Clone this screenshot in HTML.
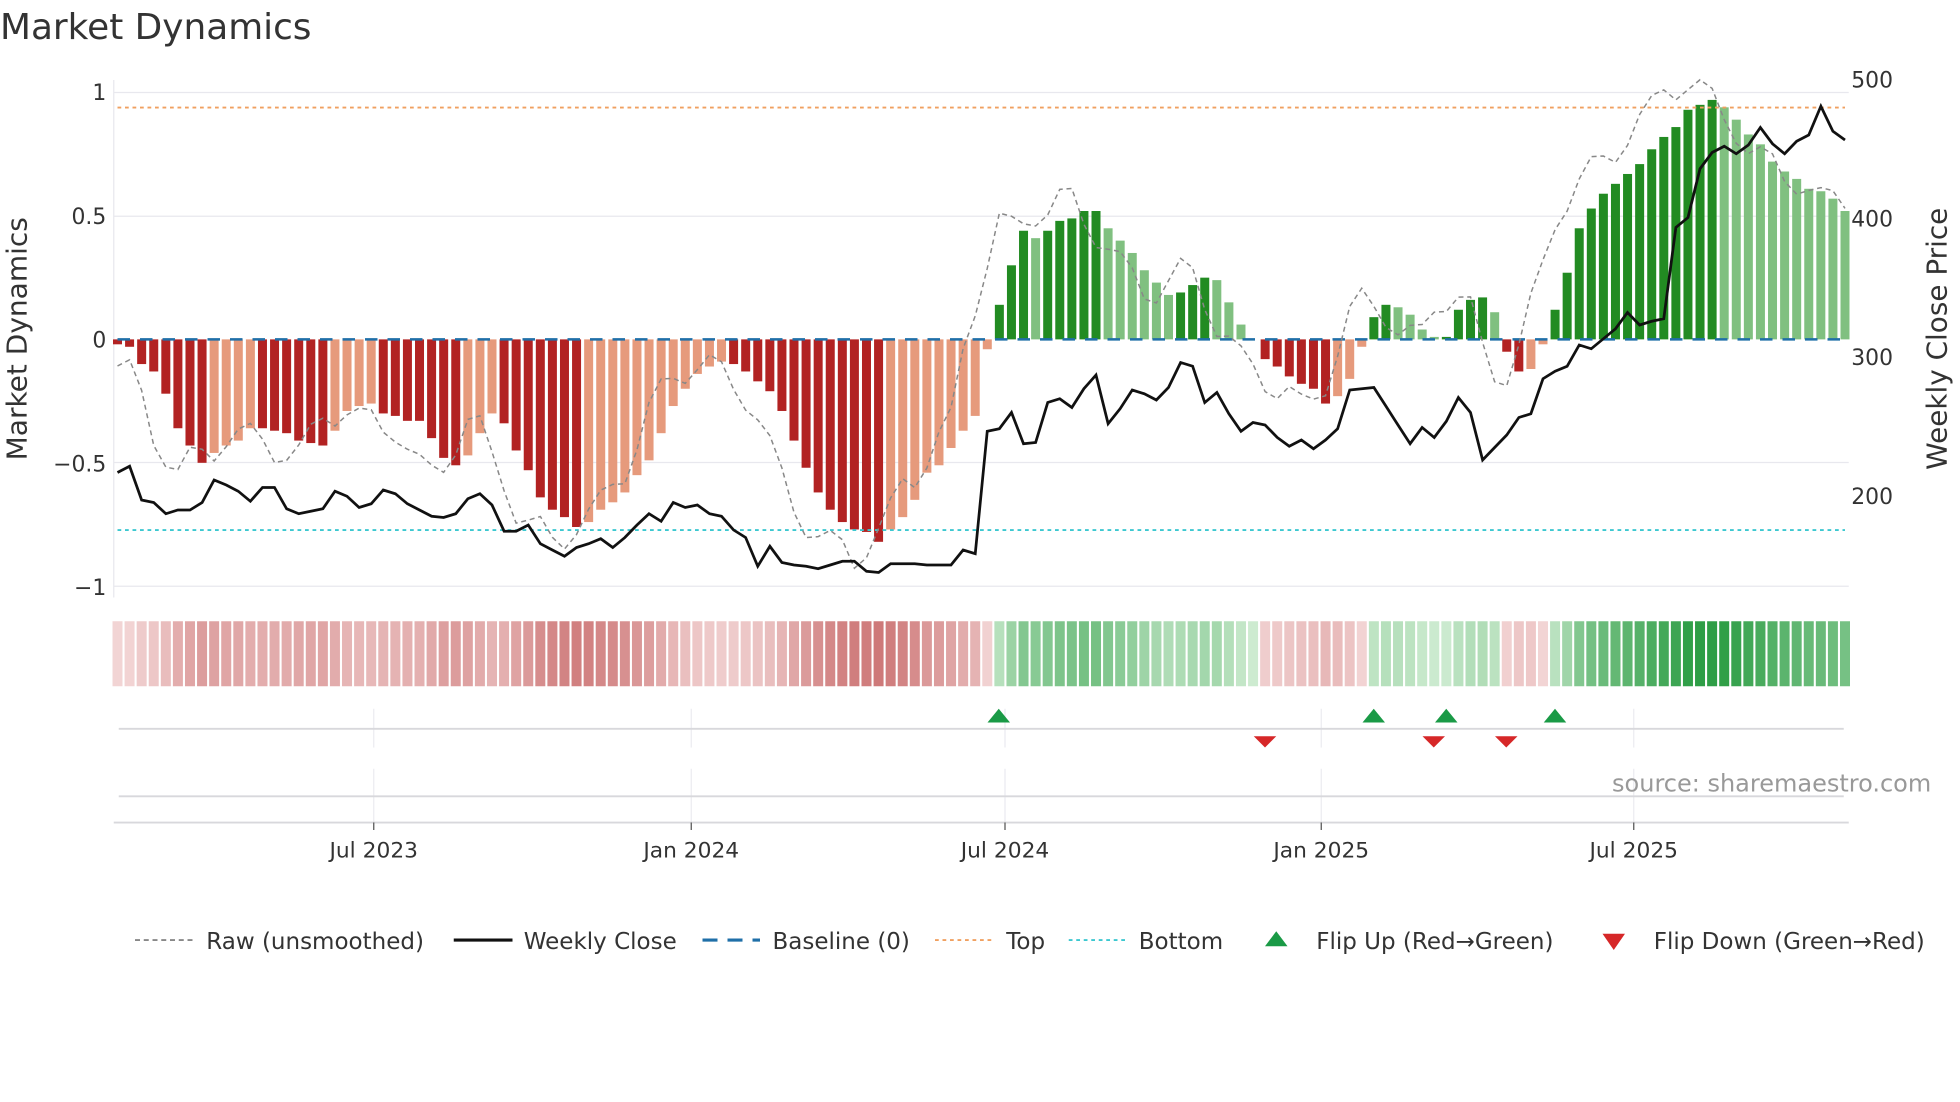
<!DOCTYPE html>
<html><head><meta charset="utf-8"><style>
html,body{margin:0;padding:0;background:#fff;width:1960px;height:1102px;overflow:hidden}
svg{display:block;font-family:"DejaVu Sans","Liberation Sans",sans-serif}
</style></head><body>
<svg id="s" width="1960" height="1102" viewBox="0 0 1568 881.6" xmlns="http://www.w3.org/2000/svg">
<rect width="1568" height="882" fill="#fff"/>
<text x="0" y="31" font-size="28.7" fill="#333">Market Dynamics</text>
<g stroke="#e8e8ee" stroke-width="1">
<line x1="91" x2="1479" y1="74" y2="74"/><line x1="91" x2="1479" y1="173" y2="173"/>
<line x1="91" x2="1479" y1="370" y2="370"/><line x1="91" x2="1479" y1="469" y2="469"/>
</g>
<line x1="91" x2="91" y1="64" y2="478" stroke="#e8e8ee"/>
<g font-size="17.5" fill="#333" text-anchor="end">
<text x="85" y="80">1</text><text x="85" y="179">0.5</text><text x="85" y="278">0</text>
<text x="85" y="377">−0.5</text><text x="85" y="476">−1</text>
</g>
<g font-size="17.5" fill="#333">
<text x="1481" y="70">500</text><text x="1481" y="181">400</text><text x="1481" y="292">300</text><text x="1481" y="403">200</text>
</g>
<text transform="translate(21,271) rotate(-90)" font-size="22.4" fill="#333" text-anchor="middle">Market Dynamics</text>
<text transform="translate(1557,271) rotate(-90)" font-size="22.3" fill="#333" text-anchor="middle">Weekly Close Price</text>
<g id="bars"></g>
<g id="strip"></g>
<line x1="94" x2="1476" y1="86" y2="86" stroke="#f0a060" stroke-width="1.5" stroke-dasharray="3,3"/>
<line x1="94" x2="1476" y1="424" y2="424" stroke="#3cc8d0" stroke-width="1.5" stroke-dasharray="3,3"/>
<line x1="94" x2="1476" y1="271.5" y2="271.5" stroke="#1f6fa8" stroke-width="2" stroke-dasharray="10,8"/>
<polyline id="raw" fill="none" stroke="#888" stroke-width="1.2" stroke-dasharray="4,3"/>
<polyline id="px" fill="none" stroke="#111" stroke-width="2.2"/>
<g stroke="#ebebf0"><line x1="299" x2="299" y1="567" y2="598"/><line x1="553" x2="553" y1="567" y2="598"/><line x1="804" x2="804" y1="567" y2="598"/><line x1="1057" x2="1057" y1="567" y2="598"/><line x1="1307" x2="1307" y1="567" y2="598"/>
<line x1="299" x2="299" y1="615" y2="658"/><line x1="553" x2="553" y1="615" y2="658"/><line x1="804" x2="804" y1="615" y2="658"/><line x1="1057" x2="1057" y1="615" y2="658"/><line x1="1307" x2="1307" y1="615" y2="658"/></g>
<line x1="95" x2="1475" y1="583" y2="583" stroke="#d8d8dc" stroke-width="1.5"/>
<line x1="95" x2="1475" y1="637" y2="637" stroke="#d8d8dc" stroke-width="1.5"/>
<line x1="91" x2="1479" y1="658" y2="658" stroke="#d8d8dc" stroke-width="1.5"/>
<g fill="#1a9a46"><path d="M790,578 L799,567 L808,578Z"/><path d="M1090,578 L1099,567 L1108,578Z"/><path d="M1148,578 L1157,567 L1166,578Z"/><path d="M1235,578 L1244,567 L1253,578Z"/></g>
<g fill="#d62728"><path d="M1003,589 L1021,589 L1012,598Z"/><path d="M1138,589 L1156,589 L1147,598Z"/><path d="M1196,589 L1214,589 L1205,598Z"/></g>
<g stroke="#555"><line x1="299" x2="299" y1="658" y2="664"/><line x1="553" x2="553" y1="658" y2="664"/><line x1="804" x2="804" y1="658" y2="664"/><line x1="1057" x2="1057" y1="658" y2="664"/><line x1="1307" x2="1307" y1="658" y2="664"/></g>
<g font-size="17.4" fill="#333" text-anchor="middle">
<text x="299" y="686">Jul 2023</text><text x="553" y="686">Jan 2024</text><text x="804" y="686">Jul 2024</text><text x="1057" y="686">Jan 2025</text><text x="1307" y="686">Jul 2025</text>
</g>
<text x="1545" y="633" font-size="19.2" fill="#999" text-anchor="end">source: sharemaestro.com</text>
<g font-size="18.4" fill="#333">
<line x1="108" x2="154" y1="752" y2="752" stroke="#888" stroke-width="1.5" stroke-dasharray="4,3"/><text x="165" y="759">Raw (unsmoothed)</text>
<line x1="363" x2="410" y1="752" y2="752" stroke="#111" stroke-width="2.5"/><text x="419" y="759">Weekly Close</text>
<line x1="562" x2="608" y1="752" y2="752" stroke="#1f6fa8" stroke-width="2.5" stroke-dasharray="12,8"/><text x="618" y="759">Baseline (0)</text>
<line x1="748" x2="794" y1="752" y2="752" stroke="#f0a060" stroke-width="1.5" stroke-dasharray="3,3"/><text x="805" y="759">Top</text>
<line x1="855" x2="901" y1="752" y2="752" stroke="#3cc8d0" stroke-width="1.5" stroke-dasharray="3,3"/><text x="911" y="759">Bottom</text>
<path d="M1012,757 L1021,745 L1030,757Z" fill="#1a9a46"/><text x="1053" y="759">Flip Up (Red→Green)</text>
<path d="M1282,747 L1300,747 L1291,760Z" fill="#d62728"/><text x="1323" y="759">Flip Down (Green→Red)</text>
</g>
</svg>
<script>
var v=[-0.02,-0.03,-0.1,-0.13,-0.22,-0.36,-0.43,-0.5,-0.46,-0.43,-0.41,-0.36,-0.36,-0.37,-0.38,-0.41,-0.42,-0.43,-0.37,-0.29,-0.27,-0.26,-0.3,-0.31,-0.33,-0.33,-0.4,-0.48,-0.51,-0.47,-0.38,-0.3,-0.34,-0.45,-0.53,-0.64,-0.69,-0.72,-0.76,-0.74,-0.69,-0.66,-0.62,-0.55,-0.49,-0.38,-0.27,-0.2,-0.14,-0.11,-0.09,-0.1,-0.13,-0.17,-0.21,-0.29,-0.41,-0.52,-0.62,-0.69,-0.74,-0.77,-0.78,-0.82,-0.77,-0.72,-0.65,-0.54,-0.51,-0.44,-0.37,-0.31,-0.04,0.14,0.3,0.44,0.41,0.44,0.48,0.49,0.52,0.52,0.45,0.4,0.35,0.28,0.23,0.18,0.19,0.22,0.25,0.24,0.15,0.06,0,-0.08,-0.11,-0.15,-0.18,-0.2,-0.26,-0.23,-0.16,-0.03,0.09,0.14,0.13,0.1,0.04,0.01,0.01,0.12,0.16,0.17,0.11,-0.05,-0.13,-0.12,-0.02,0.12,0.27,0.45,0.53,0.59,0.63,0.67,0.71,0.77,0.82,0.86,0.93,0.95,0.97,0.94,0.89,0.83,0.79,0.72,0.68,0.65,0.61,0.6,0.57,0.52];
var p=[378,373,400,402,411,408,408,402,384,388,393,401,390,390,407,411,409,407,393,397,406,403,392,395,403,408,413,414,411,399,395,404,425,425,420,435,440,445,438,435,431,438,430,420,411,417,402,406,404,411,413,424,430,453,437,450,452,453,455,452,449,449,457,458,451,451,451,452,452,452,440,443,345,343,330,355,354,322,319,326,311,300,339,327,312,315,320,310,290,293,322,314,331,345,338,340,350,357,352,359,352,343,312,311,310,325,340,355,342,350,337,318,330,368,358,348,334,331,303,297,293,276,279,271,263,250,260,257,255,182,174,135,122,117,123,116,102,115,123,113,108,85,105,112];
var n=v.length,x0=94,dx=(1476-94)/(n-1),z=271.5,k=197.5,NS="http://www.w3.org/2000/svg";
function el(t,a,par){var e=document.createElementNS(NS,t);for(var q in a)e.setAttribute(q,a[q]);par.appendChild(e);}
var B=document.getElementById('bars'),S=document.getElementById('strip');
function mix(a,b,t){var r=[];for(var i=0;i<3;i++)r.push(Math.round(a[i]+(b[i]-a[i])*t));return 'rgb('+r+')';}
for(var i=0;i<n;i++){var x=x0+i*dx,val=v[i],prev=i?v[i-1]:0;
 var dark=Math.abs(val)>=Math.abs(prev)&&(val*prev>=0||i==0)||val*prev<0;
 var col=val>=0?(dark?'#228b22':'#80c080'):(dark?'#b22222':'#e69a7c');
 var y=z-val*k;
 if(Math.abs(val)>0.003)el('rect',{x:x-3.6,y:Math.min(y,z),width:7.2,height:Math.abs(y-z),fill:col},B);
 var t=Math.min(Math.abs(val)/0.95,1);
 var sc=val>=0?mix([205,235,208],[46,158,70],t):mix([243,214,214],[200,106,106],t);
 el('rect',{x:x-4,y:497,width:8,height:52,fill:sc},S);}
var pp=[],rp=[];
for(var i=0;i<n;i++){var x=x0+i*dx;pp.push(x.toFixed(1)+','+p[i]);
 var j=Math.min(i+2,n-1),r=v[j]*1.08+0.06*Math.sin(i*1.3);rp.push(x.toFixed(1)+','+(z-r*k).toFixed(1));}
document.getElementById('px').setAttribute('points',pp.join(' '));
document.getElementById('raw').setAttribute('points',rp.join(' '));
</script>
</body></html>
